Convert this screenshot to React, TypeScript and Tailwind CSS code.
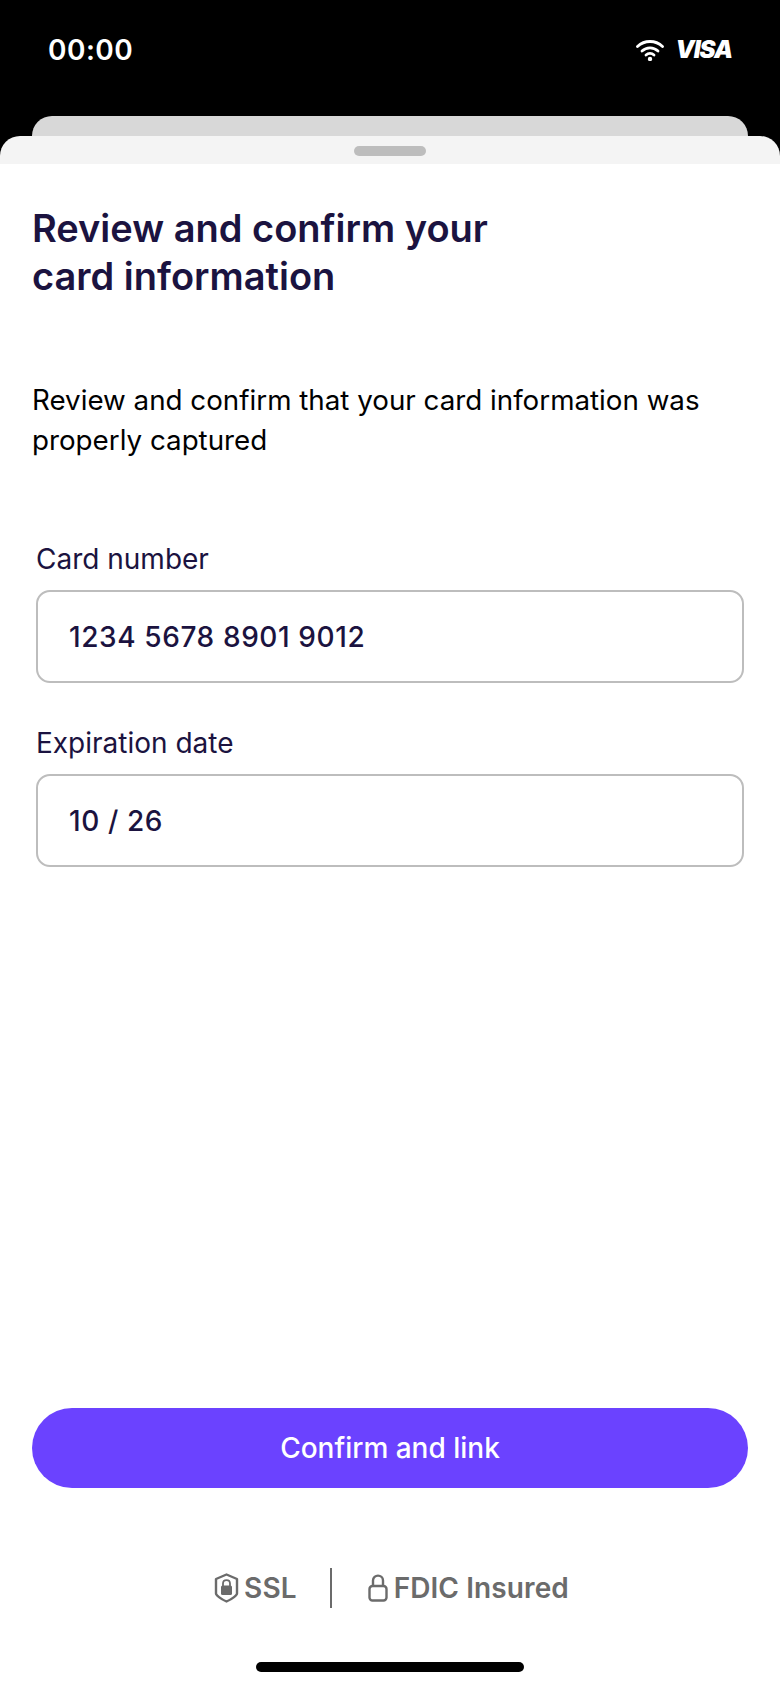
import React from 'react';

const font = { fontFamily: 'Inter, sans-serif' };

const Field = ({ label, value }: { label: string; value: string }) => (
  <div className="flex flex-col">
    <label className="text-[28px] leading-[32px] text-[#1b1340]">{label}</label>
    <div className="mt-[15px] h-[93px] flex items-center px-[31px] rounded-[14px] border-2 border-[#bdbdbd] bg-white">
      <span className="text-[28px] font-medium tracking-[0.6px] text-[#1b1340]">{value}</span>
    </div>
  </div>
);

export default function App() {
  return (
    <div className="w-[780px] h-[1688px] bg-black flex flex-col overflow-hidden" style={font}>
      <div className="h-[116px] shrink-0 flex items-start justify-between pl-[48px] pr-[48px] pt-[32px]">
        <span className="text-[28px] leading-[36px] font-semibold tracking-[0.5px] text-white">00:00</span>
        <div className="flex items-center gap-[12px] h-[36px]">
          <svg width="28" height="22" viewBox="0 0 28 22" fill="none" stroke="white" strokeWidth="2.8" strokeLinecap="round">
            <path d="M1.5 7.5C8.5 0.8 19.5 0.8 26.5 7.5" />
            <path d="M6 12C10.5 7.8 17.500 7.800 22 12" />
            <path d="M10 16C12.300 14 15.700 14 18 16" />
            <circle cx="14" cy="20" r="2.200" fill="white" stroke="none" />
          </svg>
          <span className="text-[24px] font-black italic tracking-[-1px] text-white">VISA</span>
        </div>
      </div>
      <div className="mx-[32px] h-[20px] shrink-0 rounded-t-[20px] bg-[#d8d8d8]" />
      <div className="flex-1 flex flex-col">
        <div className="h-[28px] shrink-0 rounded-t-[20px] bg-[#f4f4f4] flex justify-center pt-[10px]">
          <div className="w-[72px] h-[10px] rounded-full bg-[#bdbdbd]" />
        </div>
        <div className="flex-1 bg-white flex flex-col px-[32px]">
          <h1 className="mt-[40px] text-[38px] leading-[48px] font-semibold text-[#1b1340]">
            Review and confirm your
            <br />
            card information
          </h1>
          <p className="mt-[80px] text-[27.75px] leading-[40px] text-black">
            Review and confirm that your card information was
            <br />
            properly captured
          </p>
          <div className="mt-[83px] mx-[4px] flex flex-col gap-[44px]">
            <Field label="Card number" value="1234 5678 8901 9012" />
            <Field label="Expiration date" value="10 / 26" />
          </div>
          <button className="mt-auto h-[80px] w-full rounded-full bg-[#6b42ff] text-[28px] font-medium text-white">
            Confirm and link
          </button>
          <div className="mt-[79px] pl-[3px] flex items-center justify-center text-[28px] font-semibold tracking-[0.1px] text-[#6b6b6b]">
            <div className="flex items-center gap-[5px]">
              <svg width="25" height="30" viewBox="0 0 24 30" fill="none">
                <path d="M12 1.500L22.500 6V20.500C22.500 22 18 26 12 28.500C6 26 1.500 22 1.500 20.500V6Z" stroke="#6b6b6b" strokeWidth="2.4" strokeLinejoin="round" />
                <rect x="6.500" y="12.500" width="11" height="9.500" rx="1.500" fill="#6b6b6b" />
                <path d="M8.500 13V10.500C8.500 6 15.500 6 15.500 10.500V13" stroke="#6b6b6b" strokeWidth="1.800" />
              </svg>
              <span>SSL</span>
            </div>
            <div className="w-[2px] h-[40px] bg-[#6b6b6b] ml-[33px] mr-[36px]" />
            <div className="flex items-center gap-[6px]">
              <svg width="20" height="28" viewBox="0 0 20 28" fill="none" stroke="#6b6b6b" strokeWidth="2.400">
                <rect x="1.500" y="12" width="17" height="14.500" rx="3" />
                <path d="M5 12V6.500C5 0 15 0 15 6.500V12" />
              </svg>
              <span>FDIC Insured</span>
            </div>
          </div>
          <div className="mt-[53px] mb-[16px] mx-auto w-[268px] h-[10px] rounded-full bg-black" />
        </div>
      </div>
    </div>
  );
}
